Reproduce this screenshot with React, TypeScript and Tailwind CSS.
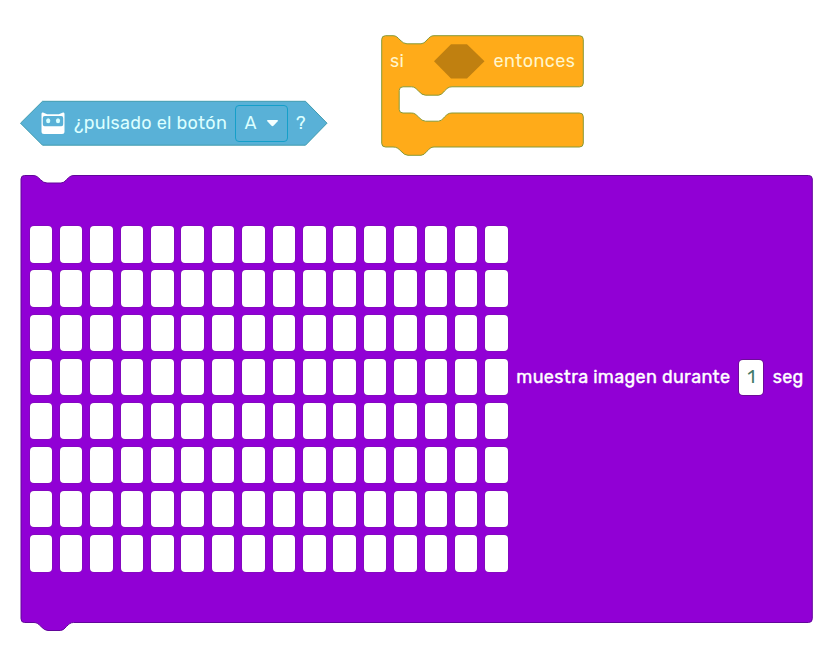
import React from "react";

const ROWS = 8;
const COLS = 16;

function BotIcon() {
  return (
    <svg width="24" height="23" viewBox="0 0 24 23" className="shrink-0">
      <path
        fillRule="evenodd"
        d="M.5 2Q.5 0 2 .6L6.2 2.3H17.8L22 .6Q23.5 0 23.5 2V19.5Q23.5 22 21 22H3Q.5 22 .5 19.5ZM1.8 6V12.2Q1.8 14.3 3.7 14.3H20.3Q22.2 14.3 22.2 12.2V6Q22.2 3.9 20.3 3.9H3.7Q1.8 3.9 1.8 6Z"
        fill="#fff"
      />
      <ellipse cx="7.2" cy="8.8" rx="2.1" ry="2.5" fill="#d8ffff" />
      <ellipse cx="17" cy="8.8" rx="2.1" ry="2.5" fill="#d8ffff" />
    </svg>
  );
}

function ButtonPressedBlock() {
  return (
    <div className="absolute left-[19px] top-[100px] h-[47px] w-[310px] text-[#dcffff]">
      <svg className="absolute inset-0" width="310" height="47">
        <path d="M1.5 23.2L23.5 1.3H286.5L308 23.2L286.5 45.2H23.5Z" fill="#59b1d7" stroke="#409caf" />
      </svg>
      <div className="relative flex h-[46px] items-center pl-[22px] text-[18px]">
        <BotIcon />
        <span className="ml-[9px] w-[154px] whitespace-nowrap tracking-[0.3px]">¿pulsado el botón</span>
        <span className="ml-[7px] flex h-[37px] w-[53px] items-center rounded-[4px] border border-[#159fc9] pl-[8.5px]">
          A
          <svg className="ml-[9px]" width="13" height="8" viewBox="0 0 13 8">
            <path d="M2 1H11Q13 1 11.5 2.6L7.7 6.6Q6.5 7.7 5.3 6.6L1.5 2.6Q0 1 2 1Z" fill="#f4ffff" />
          </svg>
        </span>
        <span className="ml-[8px]">?</span>
      </div>
    </div>
  );
}

function IfBlock() {
  return (
    <div className="absolute left-[381px] top-[35px] h-[122px] w-[204px] text-[#fff6cc]">
      <svg className="absolute inset-0" width="204" height="122">
        <path
          d="M.7 4.5Q.7.7 4.5.7H12C15 .7 16.5 2.2 19 5Q22.5 8.8 26 8.8H40Q43 8.8 46 5C48.5 2.2 50 .7 53 .7H198.5Q202.3.7 202.3 4.5V48Q202.3 51.8 198.5 51.8H71C67.5 51.8 66 53.5 63.5 56Q60.5 60.2 57.5 60.2H44.5Q41 60.2 37.5 56C35 53.5 33.5 51.8 30.5 51.8H22Q18.2 51.8 18.2 55.6V74.3Q18.2 78 22 78H30.5C33.5 78 35 79.5 37.5 82Q41 86.2 44.5 86.2H57.5Q60.5 86.2 63.5 82C66 79.5 67.5 78 71 78H198.5Q202.3 78 202.3 81.8V108.2Q202.3 112 198.5 112H53C50 112 48.5 113.7 46 116.2Q43 120.3 40 120.3H27Q23.5 120.3 20 116.2C17.5 113.7 16 112 12 112H4.5Q.7 112 .7 108.2Z"
          fill="#ffab19"
          stroke="#879a37"
        />
        <path d="M53 26.3L70 9.2H86L103.5 26.3L86 43.4H70Z" fill="#c08010" />
      </svg>
      <div className="relative flex h-[52px] items-center justify-between pl-[9px] pr-[9.5px] text-[18px] tracking-[0.43px]">
        <span>si</span>
        <span className="w-[82px] whitespace-nowrap">entonces</span>
      </div>
    </div>
  );
}

function ShowImageBlock() {
  return (
    <div className="absolute left-[20px] top-[174px] h-[458px] w-[794px] text-white">
      <svg className="absolute inset-0" width="794" height="458">
        <path
          d="M1 5Q1 1.5 4.5 1.5H13C16.5 1.5 18 3.2 20.5 5.7Q23.5 9 27 9H41Q44 9 46.5 5.7C49 3.2 50.5 1.5 54 1.5H788.5Q792.3 1.5 792.3 5V444.7Q792.3 448.5 788.5 448.5H53.5C50.5 448.5 49 450 46.5 452.5Q43.5 456.5 40.5 456.5H28Q24.5 456.5 21 452.5C18.5 450 17 448.5 14 448.5H4.5Q1 448.5 1 444.7Z"
          fill="#9100d5"
          stroke="#62069a"
        />
      </svg>
      <div className="relative flex items-start pl-[9.5px] pt-[52.4px]">
        <div className="grid shrink-0 grid-cols-[repeat(16,22.5px)] gap-x-[7.9px] gap-y-[7.6px]">
          {Array.from({ length: ROWS * COLS }, (_, i) => (
            <div key={i} className="h-[36.5px] rounded-[4px] bg-white shadow-[0_0_0_0.6px_#7b12ad]" />
          ))}
        </div>
        <div className="mt-[133.2px] flex items-center text-[18px] [-webkit-text-stroke:0.4px_currentColor]">
          <span className="ml-[8.5px] w-[215px] whitespace-nowrap tracking-[0.33px]">muestra imagen durante</span>
          <span className="ml-[8px] flex h-[35px] w-[24px] items-center justify-center rounded-[4px] bg-white text-[#427a68] shadow-[0_0_0_1px_#6e0a99] [-webkit-text-stroke:0px]">
            1
          </span>
          <span className="ml-[9.5px] tracking-[0.25px]">seg</span>
        </div>
      </div>
    </div>
  );
}

export default function App() {
  return (
    <main className="relative h-[650px] w-[829px] overflow-hidden bg-white font-['Rubik','Roboto',sans-serif]">
      <ButtonPressedBlock />
      <IfBlock />
      <ShowImageBlock />
    </main>
  );
}
